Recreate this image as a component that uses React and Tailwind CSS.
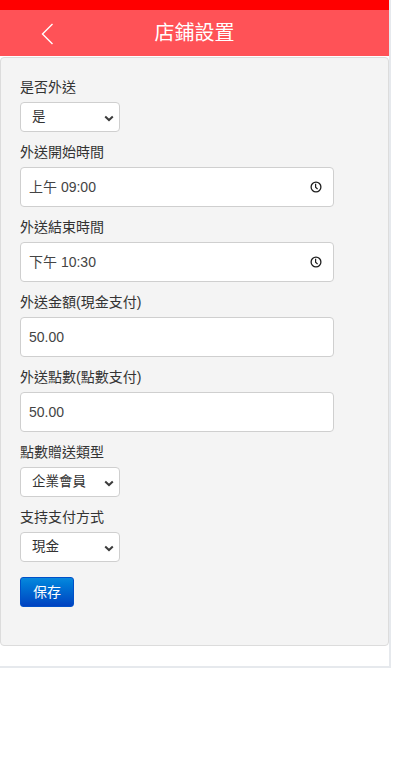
import React from "react";

const font = { fontFamily: '"Liberation Sans", "Noto Sans CJK TC", sans-serif' };

function Chevron() {
  return (
    <svg width="10" height="7" viewBox="0 0 10 7" className="absolute right-[5px] top-[12px]">
      <path d="M1.2 1.4 L5 5 L8.8 1.4" fill="none" stroke="#3c3c3c" strokeWidth="2" />
    </svg>
  );
}

function Select({ value }) {
  return (
    <div className="relative w-[100px] h-[30px] bg-white border border-[#cfcfcf] rounded-[4px] flex items-center pl-[11px] text-[13.5px] text-[#333]">
      <span>{value}</span>
      <Chevron />
    </div>
  );
}

function Clock() {
  return (
    <svg width="12" height="12" viewBox="0 0 12 12" className="absolute right-[11px] top-[13px]">
      <circle cx="6" cy="6" r="4.9" fill="none" stroke="#1f1f1f" strokeWidth="1.3" />
      <path d="M5.6 2.8 V6.2 L7.6 8.2" fill="none" stroke="#1f1f1f" strokeWidth="1.2" />
    </svg>
  );
}

function TextBox({ value, clock }) {
  return (
    <div className="relative w-[314px] h-[40px] bg-white border border-[#cfcfcf] rounded-[4px] flex items-center pl-[8px] text-[14px] text-[#444]">
      <span>{value}</span>
      {clock && <Clock />}
    </div>
  );
}

function Group({ label, children }) {
  return (
    <div className="mb-[10px]">
      <div className="text-[14px] leading-[20px] mb-[5px] text-[#333]">{label}</div>
      {children}
    </div>
  );
}

export default function App() {
  return (
    <div style={font} className="w-[391px] h-[668px] bg-white border-r-2 border-b-2 border-[#e6e9ed]">
      <div className="h-[10px] bg-[#ff0000]" />
      <div className="relative h-[46px] bg-[#ff5257] flex items-center justify-center">
        <svg width="14" height="22" viewBox="0 0 14 22" className="absolute left-[40px] top-[13px]">
          <path d="M12.5 1 L2.5 11 L12.5 21" fill="none" stroke="#fff" strokeWidth="1.4" />
        </svg>
        <span className="text-white text-[20px] leading-none">店鋪設置</span>
      </div>
      <div className="mt-[1px] border border-[#dcdcdc] rounded-[4px] bg-[#f4f4f4] pt-[19px] pl-[19px] pb-[38px]">
        <Group label="是否外送">
          <Select value="是" />
        </Group>
        <Group label="外送開始時間">
          <TextBox value="上午 09:00" clock />
        </Group>
        <Group label="外送結束時間">
          <TextBox value="下午 10:30" clock />
        </Group>
        <Group label="外送金額(現金支付)">
          <TextBox value="50.00" />
        </Group>
        <Group label="外送點數(點數支付)">
          <TextBox value="50.00" />
        </Group>
        <Group label="點數贈送類型">
          <Select value="企業會員" />
        </Group>
        <Group label="支持支付方式">
          <Select value="現金" />
        </Group>
        <button className="mt-[15px] w-[54px] h-[30px] rounded-[3px] border border-[#0050c8] bg-gradient-to-b from-[#0a88dd] to-[#0041c0] text-white text-[14px] flex items-center justify-center">
          保存
        </button>
      </div>
    </div>
  );
}
